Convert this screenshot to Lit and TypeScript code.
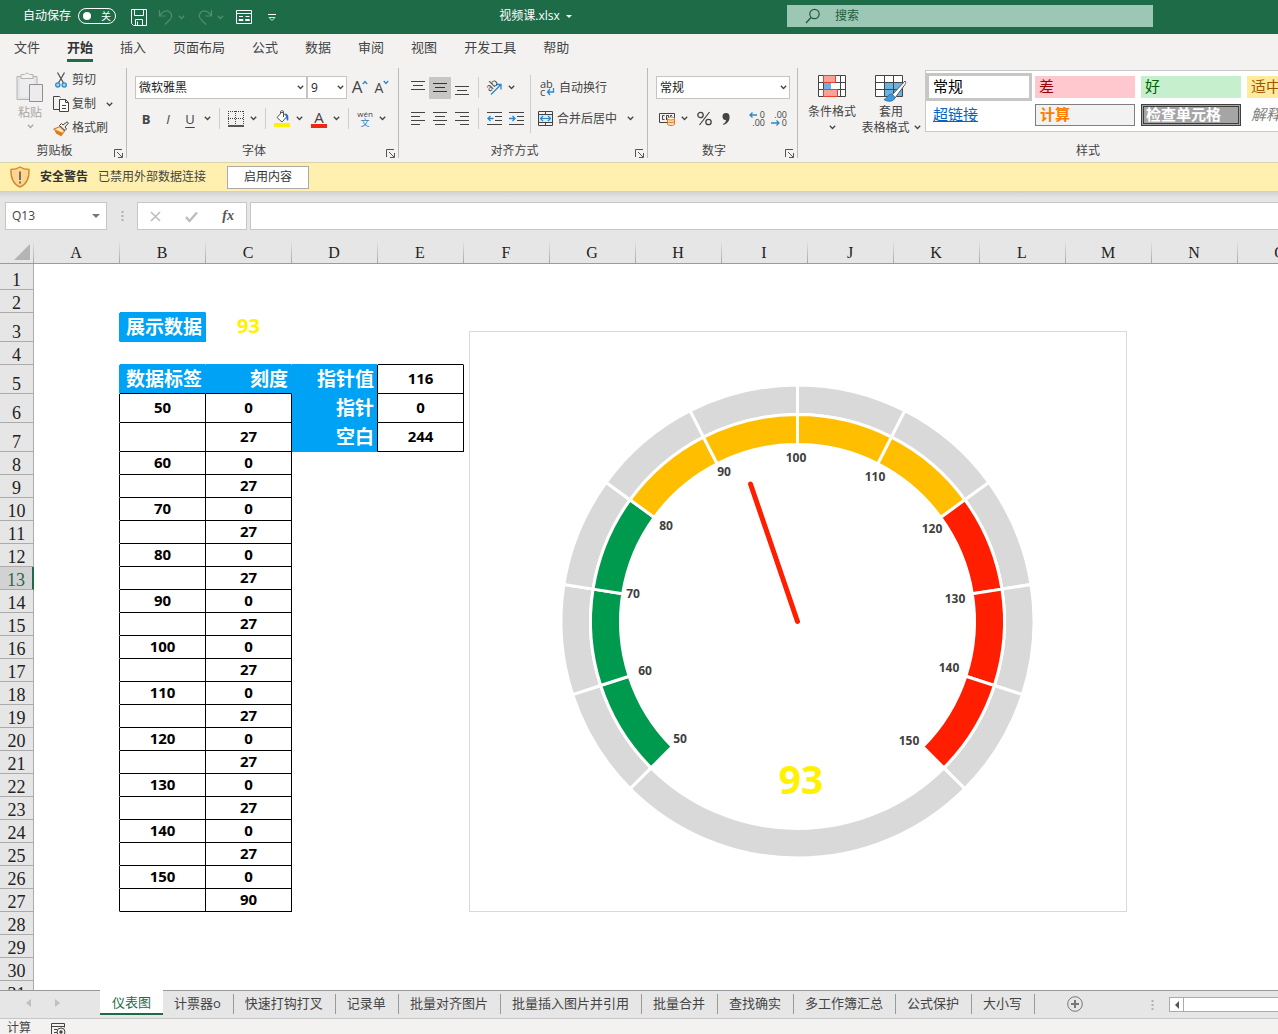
import { LitElement, html, svg, css, nothing } from "lit";
import { customElement } from "lit/decorators.js";
import { classMap } from "lit/directives/class-map.js";

const COLUMNS = ["A", "B", "C", "D", "E", "F", "G", "H", "I", "J", "K", "L", "M", "N", "O"];
const MENU = ["文件", "开始", "插入", "页面布局", "公式", "数据", "审阅", "视图", "开发工具", "帮助"];
const SHEETS = ["仪表图", "计票器o", "快速打钩打叉", "记录单", "批量对齐图片", "批量插入图片并引用", "批量合并", "查找确实", "多工作簿汇总", "公式保护", "大小写"];
const TALL_ROWS: Record<number, number> = { 1: 26, 3: 29, 5: 29, 6: 29, 7: 29 };
const ROW_HEIGHT = 23;
const ROW_COUNT = 31;

type Cell = { text: string; kind: "head" | "value" | "result" };

function buildCells(): Map<string, Cell> {
  const cells = new Map<string, Cell>();
  const put = (ref: string, text: string, kind: Cell["kind"]) => cells.set(ref, { text, kind });
  put("B3", "展示数据", "head");
  put("C3", "93", "result");
  put("B5", "数据标签", "head");
  put("C5", "刻度", "head");
  put("D5", "指针值", "head");
  put("D6", "指针", "head");
  put("D7", "空白", "head");
  put("E5", "116", "value");
  put("E6", "0", "value");
  put("E7", "244", "value");
  for (let i = 0; i < 11; i++) {
    const row = 6 + i * 2;
    put(`B${row}`, String(50 + i * 10), "value");
    put(`C${row}`, "0", "value");
    put(`B${row + 1}`, "", "value");
    put(`C${row + 1}`, i === 10 ? "90" : "27", "value");
  }
  return cells;
}
const CELLS = buildCells();

const kindAt = (col: number, row: number) => CELLS.get(`${COLUMNS[col]}${row}`)?.kind;

/* An edge is black when either neighbour holds a value, blue when either is a header. */
function edge(a?: string, b?: string) {
  if (a === "value" || b === "value") return "black";
  if (a === "head" || b === "head") return "blue";
  return "";
}

/* ---------- icons ---------- */
const icon = (w: number, h: number, body: unknown) =>
  html`<svg width=${w} height=${h} viewBox="0 0 ${w} ${h}" fill="none" aria-hidden="true">${body}</svg>`;

const chevron = icon(7, 5, svg`<path d="M.8 .8 3.5 3.5 6.2 .8" stroke="currentColor" stroke-width="1.3"/>`);

const I = {
  save: icon(16, 17, svg`<path d="M.5 .5h15v16H2.5l-2-2z M3.5 .5v6h9v-6 M4.5 16.5v-6h7v6 M6.5 12.5v4" stroke="#fff"/>`),
  undo: icon(16, 16, svg`<path d="M1.5 1v6h6 M1.5 7C4 2.500 8 1 11 2.500c4 2.500 3 6.500 .5 8.500L7 15.500" stroke="#4f8e6e" stroke-width="1.200"/>`),
  redo: icon(16, 16, svg`<path d="M14.500 1v6h-6 M14.500 7C12 2.500 8 1 5 2.500c-4 2.500-3 6.500-.5 8.500L9 15.500" stroke="#4f8e6e" stroke-width="1.200"/>`),
  form: icon(16, 14, svg`<path d="M.5 .5h15v13H.5z M.5 3.500h15" stroke="#fff"/><path d="M3 6.500h4 M3 9.500h4v1H3z M9.500 6.500h4 M9.500 9.500h4v1h-4z" stroke="#fff"/>`),
  customize: icon(8, 7, svg`<path d="M0 .5h8" stroke="#fff"/><path d="M1 3.500h6L4 6.500z" stroke="#fff" stroke-width=".8"/>`),
  search: icon(16, 16, svg`<circle cx="9.500" cy="6" r="4.700" stroke="#1d5c3c" stroke-width="1.200"/><path d="M6 9.500 1 15" stroke="#1d5c3c" stroke-width="1.300"/>`),
  paste: icon(28, 30, svg`<path d="M1 4.500h20v23H1z" fill="#e4e4e6" stroke="#b3b3b5"/><path d="M4 7h14v18H4z" fill="#ededef"/><path d="M5 2.500h3.500a3 3 0 0 1 5 0H17v4H5z" fill="#f3f2f1" stroke="#b3b3b5"/><path d="M13.500 12.500h13v17h-13z" fill="#ececef" stroke="#909093"/>`),
  cut: icon(12, 16, svg`<path d="M2.500 .5 8.500 11 M9.500 .5 3.500 11" stroke="#555" stroke-width="1.300"/><circle cx="2.800" cy="13" r="2.100" fill="#a9d4f2" stroke="#2b88c8" stroke-width="1.300"/><circle cx="9.200" cy="13" r="2.100" fill="#a9d4f2" stroke="#2b88c8" stroke-width="1.300"/>`),
  copy: icon(17, 16, svg`<path d="M6.500 13.500h-6V.5h6l1 1" stroke="#444"/><path d="M6.500 3.500h6l3 3v9h-9z" fill="#fff" stroke="#444"/><path d="M12.500 3.500v3h3 M9 9.500h4 M9 12.500h4" stroke="#444"/>`),
  brush: icon(16, 15, svg`<path d="M7 5.500 1 8c1.500 1 2 2.500 2.500 4l4.500 2.500L11.500 10z" fill="#fbe3c4" stroke="#d97b1c" stroke-width="1.200"/><path d="M2 8.500 10 12 8 14.500 3.500 12z" fill="#e07b12"/><path d="M6.500 4.500l5.500 5 1.500-1.500-1.500-2L15.500 2 14 .8 10 4 8.500 2.500z" fill="#f3f2f1" stroke="#444"/>`),
  launcher: icon(9, 9, svg`<path d="M.5 8V.5H8 M3 3l5 5 M8.500 4v4.500H4" stroke="#555"/>`),
  grow: html`<span class="fs-a big">A</span>${icon(6, 5, svg`<path d="M.8 4 3 1.500 5.200 4" stroke="#2b88c8" stroke-width="1.300"/>`)}`,
  shrink: html`<span class="fs-a">A</span>${icon(6, 5, svg`<path d="M.8 1 3 3.500 5.200 1" stroke="#2b88c8" stroke-width="1.300"/>`)}`,
  borders: icon(16, 16, svg`<path d="M0 .5h16 M0 7.500h16" stroke="#444" stroke-dasharray="1 1"/><path d="M.5 0v14 M7.500 0v14 M15.500 0v14" stroke="#444" stroke-dasharray="1 1"/><path d="M0 15h16" stroke="#222" stroke-width="1.500"/>`),
  fill: icon(17, 17, svg`<path d="M8 2 3 7.500l5 4.500 5-5.500z" fill="#fff" stroke="#555"/><path d="M6.500 4V1.500c1-1.500 3-1 3 .5v5" stroke="#555"/><path d="M11 3.500c3 0 4 3 3 7.500-1.500-1-2-3-1.800-4.500z" fill="#2b70b8"/><path d="M0 13h16v4H0z" fill="#fff100"/>`),
  fontColor: html`<span class="font-color"><b>A</b><i></i></span>`,
  phonetic: html`<span class="phonetic"><span>wén</span><span>文</span></span>`,
  alignTop: icon(14, 14, svg`<path d="M0 .5h14 M2 4.500h10 M0 8.500h14" stroke="#444"/>`),
  alignMid: icon(14, 14, svg`<path d="M0 2.500h14 M2 6.500h10 M0 10.500h14" stroke="#333"/>`),
  alignBot: icon(14, 14, svg`<path d="M0 5.500h14 M2 9.500h10 M0 13.500h14" stroke="#444"/>`),
  left: icon(14, 13, svg`<path d="M0 .5h14 M0 4.500h9 M0 8.500h14 M0 12.500h9" stroke="#444"/>`),
  center: icon(14, 13, svg`<path d="M0 .5h14 M2 4.500h10 M0 8.500h14 M2 12.500h10" stroke="#444"/>`),
  right: icon(14, 13, svg`<path d="M0 .5h14 M5 4.500h9 M0 8.500h14 M5 12.500h9" stroke="#444"/>`),
  orient: html`<span class="stack"><span class="tilt">ab</span>${icon(18, 17, svg`<path d="M6 15.500 15.500 6 M11 5.500h5v5" stroke="#2b88c8" stroke-width="1.300"/>`)}</span>`,
  outdent: icon(15, 13, svg`<path d="M0 .5h15 M8 4.500h7 M8 8.500h7 M0 12.500h15" stroke="#444"/><path d="M6.500 6.500H1 M3.500 4 1 6.500 3.500 9" stroke="#2b88c8" stroke-width="1.300"/>`),
  indent: icon(15, 13, svg`<path d="M0 .5h15 M8 4.500h7 M8 8.500h7 M0 12.500h15" stroke="#444"/><path d="M0 6.500h5.500 M3.500 4 6 6.500 3.500 9" stroke="#2b88c8" stroke-width="1.300"/>`),
  wrap: html`<span class="stack"><span class="mini ab">${"ab\nc"}</span>${icon(15, 16, svg`<path d="M13.500 8v4H7.500 M10 9l-2.500 3L10 15" stroke="#2b88c8" stroke-width="1.300"/>`)}</span>`,
  merge: icon(15, 15, svg`<path d="M.5 .5h14v14H.5z M.5 3.500h14 M.5 11.500h14 M7.500 .5v3 M7.500 11.500v3" stroke="#444"/><path d="M1 4h13v7H1z" fill="#d6eaf8"/><path d="M2.500 7.500h10 M5 5 2.500 7.500 5 10 M10 5l2.500 2.500L10 10" stroke="#2b88c8" stroke-width="1.200"/>`),
  money: icon(17, 14, svg`<path d="M.5 1.500h15v9H.5z" stroke="#444"/><path d="M5.500 3.500h-2v4h2 M7.500 8v-4.500h2v3 M11.500 5V3.500h1.500" stroke="#444"/><path d="M8.500 6.500v5.500c0 2 7 2 7 0V6.500" fill="#fbe0c0" stroke="#d97b1c"/><ellipse cx="12" cy="6.500" rx="3.500" ry="1.500" fill="#fff" stroke="#d97b1c"/><path d="M8.500 9.500c1 1.500 6 1.500 7 0" stroke="#d97b1c"/>`),
  percent: icon(15, 15, svg`<circle cx="3.500" cy="4" r="2.700" stroke="#444" stroke-width="1.300"/><circle cx="11.500" cy="11" r="2.700" stroke="#444" stroke-width="1.300"/><path d="M12.500 1 2.500 14" stroke="#444" stroke-width="1.200"/>`),
  comma: icon(8, 12, svg`<path d="M.5 3.500a3.400 3.400 0 0 1 7-.2C8 7 6 10.500 1.500 12l-.5-1c2-1 3-2.500 3-4C2 7.200 .5 6 .5 3.500z" fill="#444"/>`),
  decInc: html`<span class="stack"><span class="mini dec">${"0\n.00"}</span>${icon(16, 16, svg`<path d="M8 4H1 M3.500 1.500 1 4l2.500 2.500" stroke="#2b88c8" stroke-width="1.300"/>`)}</span>`,
  decDec: html`<span class="stack"><span class="mini dec">${".00\n0"}</span>${icon(16, 16, svg`<path d="M0 12h8 M5.500 9.500 8 12l-2.500 2.500" stroke="#2b88c8" stroke-width="1.300"/>`)}</span>`,
  conditional: icon(28, 22, svg`<path d="M.5 .5h27v21H.5z" fill="#fff"/><path d="M.5 .5h27v21H.5z M.5 7.500h27 M.5 14.500h27 M5.500 .5v21 M22.500 .5v21" stroke="#444"/><path d="M5.500 .5h12v7h-12z M5.500 14.500h14v7h-14z" fill="#f8a09a" stroke="#e8402a"/><path d="M6 8h7v6H6z" fill="#69b2e4"/>`),
  tableFormat: icon(32, 28, svg`<path d="M.5 .5h27v21H.5z" fill="#fff"/><path d="M10 7.500h17.500v14H10z" fill="#69b2e4"/><path d="M.5 .5h27v21H.5z M.5 7.500h27 M.5 14.500h27 M9.500 .5v21 M18.500 .5v21" stroke="#444"/><path d="M30 6 17 20l3 3L30 9.500c1-1.500 1-3 0-3.500z" fill="#fff" stroke="#555"/><path d="M17 19c-4-.5-4 4-8 5.500 3 2.500 10 2.500 11-2z" fill="#3f9bd8" stroke="#2b70b8"/>`),
  shield: icon(20, 22, svg`<path d="M10 1c3 2 6 2.500 9 2.500C19.500 12 17 18 10 21 3 18 .5 12 1 3.500 4 3.500 7 3 10 1z" fill="#fbd692" stroke="#d98a2b" stroke-width="1.400"/><path d="M10 5.500v8.500 M10 15.500v2" stroke="#555" stroke-width="1.600"/>`),
  cross: icon(11, 11, svg`<path d="M1 1l9 9 M10 1 1 10" stroke="#bdbdbd" stroke-width="1.600"/>`),
  check: icon(13, 11, svg`<path d="M1 6l3.500 4L12 1.500" stroke="#bdbdbd" stroke-width="2.400"/>`),
  triLeft: icon(5, 8, svg`<path d="M5 0v8L0 4z" fill="#c0c0c0"/>`),
  triRight: icon(5, 8, svg`<path d="M0 0v8l5-4z" fill="#c0c0c0"/>`),
  triScroll: icon(4, 8, svg`<path d="M4 0v8L0 4z" fill="#555"/>`),
  triDown: icon(8, 4, svg`<path d="M0 0h8L4 4z" fill="#777"/>`),
  triTitle: icon(6, 3, svg`<path d="M0 0h6L3 3z" fill="#fff"/>`),
  plus: icon(16, 16, svg`<circle cx="8" cy="8" r="7.300" stroke="#777"/><path d="M8 4v8 M4 8h8" stroke="#777" stroke-width="2"/>`),
  dots: icon(3, 12, svg`<path d="M1.500 1v2 M1.500 5v2 M1.500 9v2" stroke="#b0b0b0" stroke-width="2"/>`),
  corner: icon(16, 16, svg`<path d="M16 0v16H0z" fill="#b4b4b4"/>`),
  macro: icon(15, 13, svg`<path d="M6 12.500H.5V.5h13v4 M.5 3.500h13 M3 6.500h3 M3 9.500h3" stroke="#444"/><circle cx="10" cy="9" r="4" stroke="#444"/><circle cx="10" cy="9" r="1.700" fill="#444"/>`),
};

/* ---------- gauge ---------- */
const CX = 327.5;
const CY = 289.5;
const polar = (r: number, deg: number) => {
  const a = (deg * Math.PI) / 180;
  return [CX + r * Math.sin(a), CY - r * Math.cos(a)].map((n) => n.toFixed(2)).join(" ");
};
const ringSlice = (inner: number, outer: number, from: number, to: number) =>
  `M${polar(outer, from)} A${outer} ${outer} 0 0 1 ${polar(outer, to)} L${polar(inner, to)} A${inner} ${inner} 0 0 0 ${polar(inner, from)} Z`;
const LABELS: [string, number, number][] = [
  ["50", 210, 407], ["60", 175, 339], ["70", 163, 262], ["80", 196, 194], ["90", 254, 140], ["100", 326, 126],
  ["110", 405, 145], ["120", 462, 197], ["130", 485, 267], ["140", 479, 336], ["150", 439, 409],
];

@customElement("gauge-chart")
export class GaugeChart extends LitElement {
  static styles = css`
    :host { display: block; background: #fff; border: 1px solid #d9d9d9; }
    svg { display: block; }
    .slice { stroke: #fff; stroke-width: 3; }
    .tick { font: bold 12px "Open Sans", "Noto Sans", sans-serif; fill: #404040; text-anchor: middle; }
    .total { font: bold 39px "Open Sans", "Noto Sans", sans-serif; fill: #fff200; text-anchor: middle; }
  `;
  render() {
    const steps = Array.from({ length: 10 }, (_, i) => -135 + i * 27);
    const color = (i: number) => (i < 3 ? "#009a4e" : i < 7 ? "#ffbf00" : "#ff1e00");
    return html`<svg width="656" height="579" viewBox="0 0 656 579" role="img" aria-label="仪表图">
      ${steps.map((a) => svg`<path class="slice" d=${ringSlice(207, 236.5, a, a + 27)} fill="#d9d9d9"/>`)}
      <path class="slice" d=${ringSlice(207, 236.5, 135, 225)} fill="#d9d9d9"/>
      ${steps.map((a, i) => svg`<path class="slice" d=${ringSlice(177, 207, a, a + 27)} fill=${color(i)}/>`)}
      <path d="M327.500 289.500 280.500 152" stroke="#ff1e00" stroke-width="5" stroke-linecap="round"/>
      ${LABELS.map(([t, x, y]) => svg`<text class="tick" x=${x} y=${y + 4}>${t}</text>`)}
      <text class="total" x="331" y="462">93</text>
    </svg>`;
  }
}

const btn = (label: string, body: unknown, cls = "") =>
  html`<button class="ib ${cls}" aria-label=${label}>${body}</button>`;
const drop = (label: string) => html`<button class="chev" aria-label=${label}>${chevron}</button>`;
const sep = html`<span class="sep"></span>`;

@customElement("app-root")
export class AppRoot extends LitElement {
  static styles = css`
    :host {
      display: flex; flex-direction: column; height: 100vh; overflow: hidden;
      font: 12px/16px "Open Sans", "Noto Sans CJK SC", sans-serif; color: #444; background: #e6e6e6;
    }
    *, *::before { box-sizing: border-box; }
    button, input, select { font: inherit; color: inherit; margin: 0; padding: 0; border: 0; background: none; border-radius: 0; }
    button { display: inline-flex; align-items: center; justify-content: center; }
    svg { display: block; flex: none; overflow: visible; }

    .title { display: flex; align-items: center; flex: none; height: 34px; padding: 0 125px 2px 23px; background: #1e6b47; color: #fff; white-space: nowrap; }
    .autosave { display: flex; align-items: center; gap: 7px; }
    .switch { display: grid; align-items: center; }
    .switch > * { grid-area: 1 / 1; }
    .switch input { appearance: none; width: 38px; height: 16px; border: 1px solid #fff; border-radius: 8px; }
    .switch input::before { content: ""; display: block; width: 8px; height: 8px; margin: 3px 4px; border-radius: 50%; background: #fff; }
    .switch span { font-size: 10px; justify-self: end; padding-right: 5px; }
    .quick { display: flex; align-items: center; margin: 2px 0 0 15px; }
    .quick .push { margin-left: 11px; }
    .quick .chev { width: 9px; margin-left: 3px; color: #4f8e6e; }
    .quick .last { margin-left: 16px; }
    .file { gap: 6px; margin: 0 auto; padding-left: 8px; }
    .search { display: flex; align-items: center; width: 366px; height: 22px; gap: 14px; padding-left: 18px; background: #9dc7b5; color: #1d5c3c; }
    .search input { flex: 1; min-width: 0; outline: 0; }
    .search input::placeholder { color: #1d5c3c; opacity: 1; }

    .menu { display: flex; flex: none; height: 30px; gap: 27px; padding: 0 14px; background: #f3f2f1; font-size: 13px; }
    .menu button { padding: 3px 0; height: 28px; border-bottom: 3px solid transparent; white-space: nowrap; }
    .menu .on { font-weight: bold; color: #333; border-color: #1e6b47; }

    .ribbon { display: flex; flex: none; height: 98px; padding: 4px 0; background: #f3f2f1; white-space: nowrap; }
    .group { display: flex; flex-direction: column; flex: none; padding: 4px 7px 0 8px; border-right: 1px solid #bdbbb8; }
    .group.clip { width: 127px; }
    .clip .body { padding-left: 8px; }
    .group.font { width: 272px; }
    .group.align { width: 249px; }
    .group.num { width: 150px; }
    .group.styles { flex: 1; min-width: 0; border: 0; padding: 2px 0 0 10px; }
    .body { display: flex; flex: 1; }
    .foot { display: flex; align-items: center; justify-content: center; height: 14px; padding-right: 18px; position: relative; }
    .foot button { position: absolute; right: -4px; bottom: 0; }
    .styles .foot { padding: 0 0 0 90px; }
    .rows { display: flex; flex-direction: column; }
    .row { display: flex; align-items: center; height: 31px; }
    .gap2 { margin-left: 2px; }
    .ib { flex: none; width: 22px; height: 22px; }
    .ib.on { background: #c8c6c4; }
    .chev { flex: none; width: 13px; height: 22px; }
    .sep { width: 1px; height: 21px; margin: 0 4px 0 5px; background: #cfcdcb; }
    .font .sep { margin: 0 5px; }
    .tall { width: 1px; height: 58px; margin: 3px 7px 0 3px; background: #cfcdcb; }
    .txt { gap: 4px; }
    .txt + .chev { margin-left: 7px; }
    .stack { display: grid; }
    .stack > * { grid-area: 1 / 1; }
    .mini { white-space: pre-line; line-height: 8px; }
    .mini.ab { font-size: 11px; text-align: left; }
    .mini.dec { font-size: 9px; text-align: right; }
    .tilt { font-size: 11px; line-height: 12px; justify-self: start; align-self: start; transform: rotate(-45deg); }
    .picker { display: grid; align-items: center; }
    .picker > * { grid-area: 1 / 1; }
    .picker select { appearance: none; height: 23px; padding-left: 3px; border: 1px solid #c6c4c2; background: #fff; color: #222; outline: 0; }
    .picker svg { justify-self: end; margin-right: 3px; pointer-events: none; }
    .picker .w172 { width: 172px; }
    .picker .w40 { width: 40px; }
    .picker .w134 { width: 134px; }
    .fs-a { font-size: 14px; line-height: 22px; }
    .fs-a.big { font-size: 17px; line-height: 20px; }
    .fs-b { align-items: flex-start; }
    .fs-b svg { margin-top: 3px; }
    .bold { font-weight: bold; font-size: 13px; }
    .ital { font-style: italic; font-size: 13px; }
    .under { text-decoration: underline; text-underline-offset: 3px; font-size: 13px; }
    .font-color { display: flex; flex-direction: column; align-items: center; }
    .font-color b { font-weight: normal; font-size: 15px; line-height: 14px; }
    .font-color i { width: 16px; height: 4px; background: #f22613; }
    .phonetic { display: flex; flex-direction: column; align-items: center; font-size: 8px; line-height: 8px; }
    .phonetic span + span { color: #2b88c8; font-size: 9px; line-height: 10px; }
    .paste { flex-direction: column; width: 28px; gap: 2px; color: #a9a7a5; justify-content: flex-start; }
    .paste .cap { display: block; line-height: 18px; }
    .clipbtns { display: flex; flex-direction: column; align-items: flex-start; padding-left: 8px; margin-top: -4px; }
    .clipbtns > * { height: 24px; }
    .clipbtns .copy { display: flex; align-items: center; }
    .clipbtns .ico { display: inline-flex; justify-content: center; width: 18px; margin-right: 2px; }
    .clipbtns .chev { margin-left: 7px; }
    .bigbtn { flex-direction: column; justify-content: flex-start; margin-right: 5px; padding-top: 5px; width: 48px; }
    .bigbtn.wide { width: 60px; margin-right: 4px; }
    .bigbtn .pic { height: 29px; }
    .bigbtn .l2 { display: flex; align-items: center; gap: 4px; height: 15px; }
    .gallery { display: grid; grid-template-columns: repeat(4, 100px); grid-auto-rows: 22px; gap: 6px; flex: 1; min-width: 0; overflow: hidden; height: 62px; padding: 5px 3px; border: 1px solid #c8c8c8; border-right: 0; background: #fff; }
    .gallery button { justify-content: flex-start; padding: 0 0 3px 4px; font-size: 15px; line-height: 20px; }
    .gallery .g-normal { outline: 3px solid #c6c6c6; color: #000; }
    .gallery .g-bad { background: #ffc7ce; color: #9c0006; }
    .gallery .g-good { background: #c6efce; color: #006100; }
    .gallery .g-mid { background: #ffeb9c; color: #9c5700; }
    .gallery .g-link { color: #0563c1; text-decoration: underline; }
    .gallery .g-calc { background: #f2f2f2; border: 1px solid #7f7f7f; color: #fa7d00; font-weight: bold; }
    .gallery .g-check { background: #a5a5a5; border: 3px double #3f3f3f; color: #fff; font-weight: bold; padding-left: 2px; }
    .gallery .g-note { color: #7f7f7f; font-style: italic; }

    .warn { display: flex; align-items: center; flex: none; height: 30px; padding: 0 10px; border: solid #d8d3a8; border-width: 1px 0; background: #fff0b0; white-space: nowrap; }
    .warn strong { margin: 0 10px; color: #333; }
    .warn p { margin: 0 21px 0 0; }
    .warn button { width: 82px; height: 23px; border: 1px solid #ababab; background: #fff; color: #333; }

    .formula { display: flex; flex: none; height: 48px; padding: 10px 0 10px 5px; background: linear-gradient(#d2d2d2, #e6e6e6 6px); }
    .box { display: flex; align-items: center; border: 1px solid #c6c6c6; background: #fff; height: 28px; }
    .name { width: 102px; padding: 0 6px; }
    .name input { flex: 1; min-width: 0; outline: 0; }
    .formula .grip { align-self: center; margin: 0 13px 0 14px; }
    .fx { width: 110px; margin-right: 3px; padding: 0 12px; justify-content: space-between; }
    .fx em { font: italic bold 14px/16px "Liberation Serif", serif; color: #555; }
    .formula .entry { flex: 1; min-width: 0; height: 28px; padding: 0 6px; border: 1px solid #c6c6c6; border-right: 0; background: #fff; outline: 0; }

    .sheet { flex: 1; min-height: 0; overflow: hidden; position: relative; }
    table { border-collapse: separate; border-spacing: 0; table-layout: fixed; width: 1324px; background: #fff; }
    .c0 { width: 34px; }
    th { font: 18px/20px "Liberation Serif", "Noto Sans CJK SC", serif; color: #222; background: #e6e6e6; padding: 0; }
    thead th { height: 24px; padding: 2px 2px 0 0; font-size: 16px; border-bottom: 1px solid #9b9b9b; background: linear-gradient(#e6e6e6, #a8a8a8) right / 1px 100% no-repeat, #e6e6e6; }
    thead .corner { padding: 0 4px 3px 0; vertical-align: bottom; }
    .corner svg { margin-left: auto; }
    tbody th { vertical-align: bottom; border: solid #ababab; border-width: 0 1px 1px 0; line-height: 17px; }
    tbody th.cur { background: #d2d2d2; color: #1e6b47; border-right: 2px solid #1e6b47; }
    td { padding: 0 3px 0 2px; border: solid transparent; border-width: 0 1px 1px 0; line-height: 20px; white-space: nowrap; }
    td.head { background: #00a2f5; color: #fff; font-weight: bold; font-size: 19px; text-align: right; }
    td.value { padding: 0 2px 2px; color: #000; font-weight: bold; font-size: 15px; text-align: center; }
    td.result { padding: 0 2px 2px; color: #fff200; font-weight: bold; font-size: 20px; text-align: center; }
    td.r-black { border-right-color: #000; }
    td.r-blue { border-right-color: #00a2f5; }
    td.b-black { border-bottom-color: #000; }
    td.b-blue { border-bottom-color: #00a2f5; }
    gauge-chart { position: absolute; left: 469px; top: 91px; }

    .tabs { display: flex; flex: none; height: 28px; border-top: 1px solid #999; background: #e6e6e6; font-size: 13px; white-space: nowrap; }
    .arrows { display: flex; align-items: center; gap: 24px; width: 100px; padding: 0 0 3px 26px; flex: none; }
    .tabs .tab { height: 20px; margin-top: 3px; padding: 0 12px 3px 11px; border-right: 1px solid #999; }
    .tabs .tab.on { margin-top: -1px; height: 25px; padding: 0 12px; background: #fff; color: #1e6b47; border: 0; border-bottom: 2px solid #1e6b47; }
    .add { margin-left: 32px; padding-bottom: 1px; }
    .scroll { display: flex; align-items: center; gap: 15px; flex: none; width: 127px; margin-left: auto; }
    .track { display: flex; flex: 1; height: 15px; border: 1px solid #ababab; border-right: 0; background: #fff; }
    .track button { width: 14px; border-right: 1px solid #ababab; }

    .status { display: flex; flex: none; height: 16px; gap: 20px; padding: 1px 7px 0; border-top: 1px solid #c6c6c6; background: #f3f2f1; overflow: hidden; }
    .status svg { margin-top: 3px; }
  `;

  private renderRow(row: number) {
    const height = TALL_ROWS[row] ?? ROW_HEIGHT;
    return html`<tr style="height:${height}px">
      <th scope="row" class=${row === 13 ? "cur" : ""}>${row}</th>
      ${COLUMNS.map((c, i) => {
        const cell = CELLS.get(`${c}${row}`);
        const right = edge(cell?.kind, kindAt(i + 1, row));
        const bottom = edge(cell?.kind, kindAt(i, row + 1));
        const classes = {
          [cell?.kind ?? "empty"]: true,
          "r-black": right === "black", "r-blue": right === "blue",
          "b-black": bottom === "black", "b-blue": bottom === "blue",
        };
        return html`<td class=${classMap(classes)}>${cell?.text ?? nothing}</td>`;
      })}
    </tr>`;
  }

  private renderRibbon() {
    const foot = (t: string, launch = true) =>
      html`<div class="foot">${t}${launch ? html`<button aria-label="${t}设置">${I.launcher}</button>` : nothing}</div>`;
    return html`<div class="ribbon">
      <section class="group clip">
        <div class="body">
          <button class="paste">${I.paste}<span class="cap">粘贴</span>${chevron}</button>
          <div class="clipbtns">
            <button><span class="ico">${I.cut}</span>剪切</button>
            <span class="copy"><button><span class="ico">${I.copy}</span>复制</button>${drop("复制选项")}</span>
            <button><span class="ico">${I.brush}</span>格式刷</button>
          </div>
        </div>
        ${foot("剪贴板")}
      </section>
      <section class="group font">
        <div class="body rows">
          <div class="row">
            <span class="picker"><select class="w172" aria-label="字体"><option>微软雅黑</option></select>${chevron}</span>
            <span class="picker"><select class="w40" aria-label="字号"><option>9</option></select>${chevron}</span>
            ${btn("增大字号", I.grow, "fs-b gap2")}${btn("减小字号", I.shrink, "fs-b")}
          </div>
          <div class="row">
            ${btn("加粗", "B", "bold")}${btn("倾斜", "I", "ital")}${btn("下划线", "U", "under")}${drop("下划线选项")}${sep}
            ${btn("边框", I.borders)}${drop("边框选项")}${sep}
            ${btn("填充颜色", I.fill)}${drop("填充颜色选项")}${btn("字体颜色", I.fontColor, "gap2")}${drop("字体颜色选项")}${sep}
            ${btn("拼音指南", I.phonetic)}${drop("拼音选项")}
          </div>
        </div>
        ${foot("字体")}
      </section>
      <section class="group align">
        <div class="body">
          <div class="rows">
            <div class="row">${btn("顶端对齐", I.alignTop)}${btn("垂直居中", I.alignMid, "on")}${btn("底端对齐", I.alignBot)}${sep}${btn("方向", I.orient)}${drop("方向选项")}</div>
            <div class="row">${btn("左对齐", I.left)}${btn("居中", I.center)}${btn("右对齐", I.right)}${sep}${btn("减少缩进量", I.outdent)}${btn("增加缩进量", I.indent)}</div>
          </div>
          <span class="tall"></span>
          <div class="rows">
            <div class="row"><button class="txt gap2">${I.wrap}自动换行</button></div>
            <div class="row"><button class="txt">${I.merge}合并后居中</button>${drop("合并选项")}</div>
          </div>
        </div>
        ${foot("对齐方式")}
      </section>
      <section class="group num">
        <div class="body rows">
          <div class="row"><span class="picker"><select class="w134" aria-label="数字格式"><option>常规</option></select>${chevron}</span></div>
          <div class="row">
            ${btn("会计数字格式", I.money)}${drop("会计选项")}${btn("百分比样式", I.percent, "gap2")}${btn("千位分隔样式", I.comma)}${sep}
            ${btn("增加小数位数", I.decInc)}${btn("减少小数位数", I.decDec)}
          </div>
        </div>
        ${foot("数字")}
      </section>
      <section class="group styles">
        <div class="body">
          <button class="bigbtn"><span class="pic">${I.conditional}</span><span>条件格式</span><span class="l2">${chevron}</span></button>
          <button class="bigbtn wide"><span class="pic">${I.tableFormat}</span><span>套用</span><span class="l2">表格格式${chevron}</span></button>
          <div class="gallery">
            <button class="g-normal">常规</button><button class="g-bad">差</button><button class="g-good">好</button><button class="g-mid">适中</button>
            <button class="g-link">超链接</button><button class="g-calc">计算</button><button class="g-check">检查单元格</button><button class="g-note">解释性文本</button>
          </div>
        </div>
        ${foot("样式", false)}
      </section>
    </div>`;
  }

  render() {
    return html`
      <header class="title">
        <label class="autosave">自动保存<span class="switch"><input type="checkbox" role="switch" /><span>关</span></span></label>
        <div class="quick">
          <button aria-label="保存">${I.save}</button>
          <button class="push" aria-label="撤消">${I.undo}</button>${drop("撤消选项")}
          <button class="push" aria-label="恢复">${I.redo}</button>${drop("恢复选项")}
          <button class="push" aria-label="记录单">${I.form}</button>
          <button class="last" aria-label="自定义快速访问工具栏">${I.customize}</button>
        </div>
        <button class="file">视频课.xlsx ${I.triTitle}</button>
        <label class="search">${I.search}<input type="search" placeholder="搜索" aria-label="搜索" /></label>
      </header>
      <nav class="menu">${MENU.map((m) => html`<button class=${m === "开始" ? "on" : ""}>${m}</button>`)}</nav>
      ${this.renderRibbon()}
      <div class="warn">${I.shield}<strong>安全警告</strong><p>已禁用外部数据连接</p><button>启用内容</button></div>
      <div class="formula">
        <div class="box name"><input aria-label="名称框" value="Q13" /><button aria-label="名称列表">${I.triDown}</button></div>
        <span class="grip">${I.dots}</span>
        <div class="box fx"><button aria-label="取消">${I.cross}</button><button aria-label="输入">${I.check}</button><button aria-label="插入函数"><em>fx</em></button></div>
        <input class="entry" aria-label="编辑栏" />
      </div>
      <main class="sheet">
        <table>
          <colgroup><col class="c0" />${COLUMNS.map(() => html`<col />`)}</colgroup>
          <thead><tr><th class="corner">${I.corner}</th>${COLUMNS.map((c) => html`<th scope="col">${c}</th>`)}</tr></thead>
          <tbody>${Array.from({ length: ROW_COUNT }, (_, i) => this.renderRow(i + 1))}</tbody>
        </table>
        <gauge-chart></gauge-chart>
      </main>
      <nav class="tabs">
        <div class="arrows"><button aria-label="上一个工作表">${I.triLeft}</button><button aria-label="下一个工作表">${I.triRight}</button></div>
        ${SHEETS.map((s, i) => html`<button class="tab ${i === 0 ? "on" : ""}">${s}</button>`)}
        <button class="add" aria-label="新工作表">${I.plus}</button>
        <div class="scroll">${I.dots}<div class="track"><button aria-label="向左滚动">${I.triScroll}</button></div></div>
      </nav>
      <footer class="status"><span>计算</span>${I.macro}</footer>
    `;
  }
}
